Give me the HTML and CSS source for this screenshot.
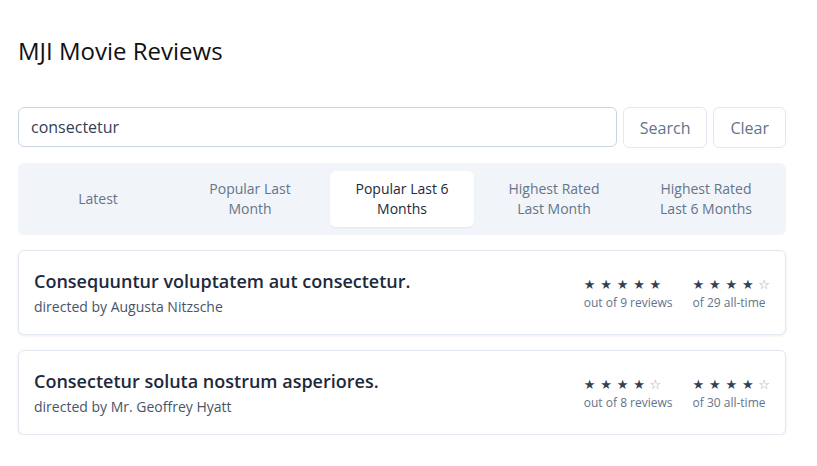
FILE: index.html
```html
<!DOCTYPE html>
<html lang="en">
<head>
<meta charset="utf-8">
<title>MJI Movie Reviews</title>
<link rel="stylesheet" href="styles.css">
</head>
<body>
<main class="page">
  <h1 class="title">MJI Movie Reviews</h1>
  <form class="search">
    <input class="search-input" type="text" value="consectetur">
    <button class="btn" type="button">Search</button>
    <button class="btn" type="button">Clear</button>
  </form>
  <nav class="tabs">
    <div class="tab">Latest</div>
    <div class="tab">Popular Last Month</div>
    <div class="tab tab-active">Popular Last 6 Months</div>
    <div class="tab">Highest Rated Last Month</div>
    <div class="tab">Highest Rated Last 6 Months</div>
  </nav>
  <section class="list">
    <article class="card">
      <div class="info">
        <h2 class="movie">Consequuntur voluptatem aut consectetur.</h2>
        <p class="director">directed by Augusta Nitzsche</p>
      </div>
      <div class="stats">
        <div class="stat">
          <div class="stars"><span>★</span><span>★</span><span>★</span><span>★</span><span>★</span></div>
          <div class="stat-label">out of 9 reviews</div>
        </div>
        <div class="stat">
          <div class="stars"><span>★</span><span>★</span><span>★</span><span>★</span><span class="empty">☆</span></div>
          <div class="stat-label">of 29 all-time</div>
        </div>
      </div>
    </article>
    <article class="card">
      <div class="info">
        <h2 class="movie">Consectetur soluta nostrum asperiores.</h2>
        <p class="director">directed by Mr. Geoffrey Hyatt</p>
      </div>
      <div class="stats">
        <div class="stat">
          <div class="stars"><span>★</span><span>★</span><span>★</span><span>★</span><span class="empty">☆</span></div>
          <div class="stat-label">out of 8 reviews</div>
        </div>
        <div class="stat">
          <div class="stars"><span>★</span><span>★</span><span>★</span><span>★</span><span class="empty">☆</span></div>
          <div class="stat-label">of 30 all-time</div>
        </div>
      </div>
    </article>
  </section>
</main>
</body>
</html>
```
FILE: styles.css
```css
* { box-sizing: border-box; }
html, body { margin: 0; padding: 0; background: #fff; }
body {
  font-family: "Open Sans", "Noto Sans", sans-serif;
  color: #1e293b;
}
.page {
  width: 768px;
  margin-left: 18px;
  padding-top: 35px;
}
.title {
  margin: 0;
  font-size: 24px;
  line-height: 32px;
  font-weight: 400;
  color: #111;
}
.search {
  display: flex;
  gap: 6px;
  margin-top: 40px;
}
.search-input {
  flex: 1;
  height: 40px;
  border: 1px solid #cbd5e1;
  border-radius: 6px;
  padding: 0 12px;
  font-family: inherit;
  font-size: 16px;
  color: #334155;
  outline: none;
}
.btn {
  height: 41px;
  padding: 0 16px;
  background: #fff;
  border: 1px solid #e2e8f0;
  border-radius: 6px;
  font-family: inherit;
  font-size: 16px;
  color: #64748b;
}
.tabs {
  display: grid;
  grid-template-columns: repeat(5, 1fr);
  gap: 8px;
  margin-top: 15px;
  padding: 8px;
  background: #f1f5f9;
  border-radius: 6px;
}
.tab {
  display: flex;
  align-items: center;
  justify-content: center;
  text-align: center;
  min-height: 56px;
  padding: 8px 12px;
  font-size: 14px;
  line-height: 20px;
  color: #64748b;
  border-radius: 6px;
}
.tab-active {
  background: #fff;
  color: #1e293b;
  box-shadow: 0 1px 2px rgba(15, 23, 42, 0.06);
}
.list {
  display: flex;
  flex-direction: column;
  gap: 15px;
  margin-top: 15px;
}
.card {
  display: flex;
  align-items: center;
  justify-content: space-between;
  padding: 16px 15px 17px;
  border: 1px solid #e2e8f0;
  border-radius: 6px;
  background: #fff;
  box-shadow: 0 1px 3px rgba(15, 23, 42, 0.08);
}
.movie {
  margin: 0;
  font-size: 18px;
  line-height: 28px;
  font-weight: 600;
  color: #1e293b;
}
.director {
  margin: 2px 0 0;
  font-size: 14px;
  line-height: 20px;
  color: #475569;
}
.stats {
  display: flex;
  gap: 20px;
}
.stars {
  display: flex;
  gap: 4.8px;
  font-family: "DejaVu Sans", sans-serif;
  font-size: 13px;
  line-height: 21px;
  color: #334155;
}
.stars .empty { color: #94a3b8; }
.stat-label {
  font-size: 12px;
  line-height: 16px;
  color: #64748b;
}
```
